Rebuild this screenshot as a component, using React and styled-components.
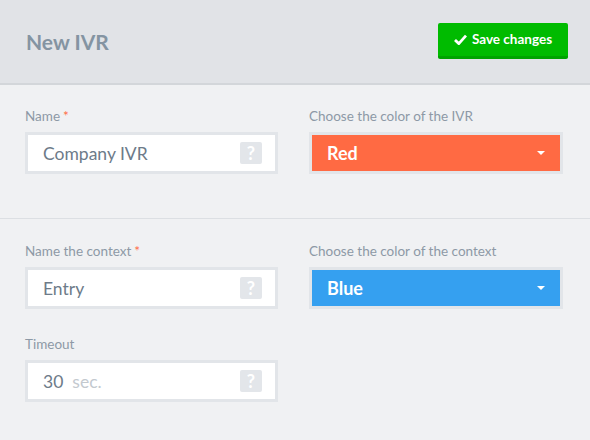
import React from 'react';
import styled, { createGlobalStyle } from 'styled-components';

const GlobalStyle = createGlobalStyle`
  html, body {
    margin: 0;
    padding: 0;
    background: #f0f1f3;
    font-family: Lato, 'Open Sans', sans-serif;
  }
`;

const Header = styled.div`
  height: 83px;
  background: #e1e3e7;
  border-bottom: 2px solid #d3d6da;
  display: flex;
  align-items: center;
  justify-content: space-between;
  padding: 0 22px 0 26px;
`;

const Title = styled.h1`
  margin: 0;
  font-size: 21px;
  font-weight: 700;
  color: #8494a2;
`;

const SaveButton = styled.button`
  display: flex;
  align-items: center;
  gap: 5px;
  height: 36px;
  width: 130px;
  justify-content: center;
  margin-top: -2px;
  background: #00bb00;
  border: none;
  border-bottom: 3px solid #00a300;
  border-radius: 2px;
  color: #fff;
  font-family: inherit;
  font-size: 13.5px;
  font-weight: 700;
  cursor: pointer;
`;

const Section = styled.div`
  display: grid;
  grid-template-columns: 253px 254px;
  column-gap: 31px;
  row-gap: 27px;
  padding: ${({ top }) => top}px 27px 44px 25px;
  border-bottom: ${({ last }) => (last ? 'none' : '1px solid #dcdfe3')};
`;

const Field = styled.div`
  display: flex;
  flex-direction: column;
  gap: 8px;
`;

const Label = styled.label`
  font-size: 13.5px;
  line-height: 16px;
  color: #8d99a6;
`;

const Required = styled.span`
  color: #ff6a43;
  margin-left: 3px;
`;

const InputBox = styled.div`
  height: 36px;
  border: 3px solid #e2e5e9;
  background: #fff;
  display: flex;
  align-items: center;
  padding: 0 13px 0 15px;
  font-size: 17.5px;
  color: #6d7b89;
`;

const Value = styled.span`
  flex: 1;
`;

const Unit = styled.span`
  color: #c3c9cf;
  margin-left: 9px;
`;

const Help = styled.span`
  width: 22px;
  height: 22px;
  border-radius: 2px;
  background: #e3e6ea;
  color: #fff;
  font-size: 18px;
  font-weight: 700;
  display: flex;
  align-items: center;
  justify-content: center;
`;

const Select = styled.div`
  height: 36px;
  border: 3px solid #e2e5e9;
  background: ${({ color }) => color};
  display: flex;
  align-items: center;
  justify-content: space-between;
  padding: 0 15px 0 15px;
  font-size: 18px;
  font-weight: 700;
  color: #fff;
`;

const Caret = styled.span`
  width: 0;
  height: 0;
  border-left: 4px solid transparent;
  border-right: 4px solid transparent;
  border-top: 4px solid #fff;
`;

const Check = () => (
  <svg width="13" height="11" viewBox="0 0 13 11">
    <path d="M1 6 L4.8 9.6 L12 1.6" fill="none" stroke="#fff" strokeWidth="2.8" />
  </svg>
);

const App = () => {
  return (
    <>
      <GlobalStyle />
      <Header>
        <Title>New IVR</Title>
        <SaveButton>
          <Check />
          Save changes
        </SaveButton>
      </Header>
      <Section top={23}>
        <Field>
          <Label>Name<Required>*</Required></Label>
          <InputBox>
            <Value>Company IVR</Value>
            <Help>?</Help>
          </InputBox>
        </Field>
        <Field>
          <Label>Choose the color of the IVR</Label>
          <Select color="#ff6a43">
            Red
            <Caret />
          </Select>
        </Field>
      </Section>
      <Section top={24} last>
        <Field>
          <Label>Name the context<Required>*</Required></Label>
          <InputBox>
            <Value>Entry</Value>
            <Help>?</Help>
          </InputBox>
        </Field>
        <Field>
          <Label>Choose the color of the context</Label>
          <Select color="#35a0f0">
            Blue
            <Caret />
          </Select>
        </Field>
        <Field>
          <Label>Timeout</Label>
          <InputBox>
            <Value>30<Unit>sec.</Unit></Value>
            <Help>?</Help>
          </InputBox>
        </Field>
      </Section>
    </>
  );
};

export default App;
